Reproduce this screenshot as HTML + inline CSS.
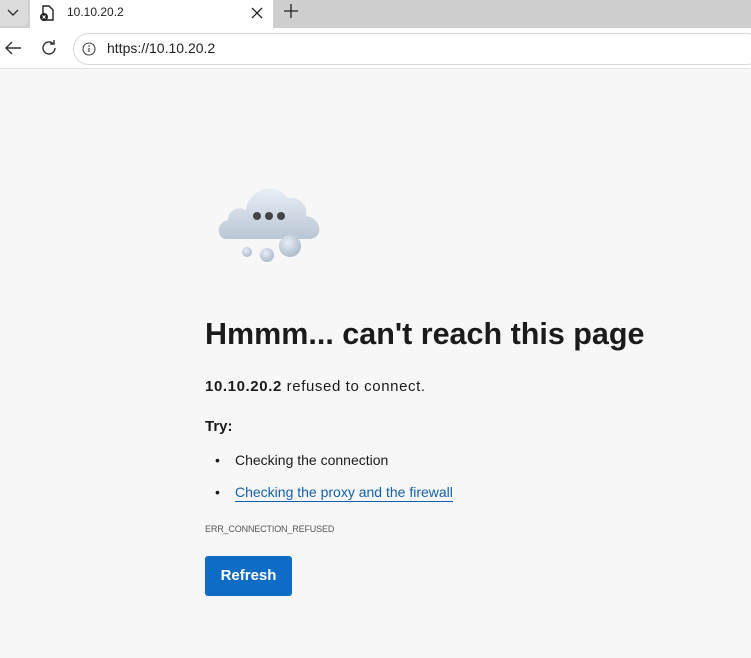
<!DOCTYPE html>
<html><head><meta charset="utf-8"><style>
*{margin:0;padding:0;box-sizing:border-box}
body{width:751px;height:658px;overflow:hidden;background:#f7f7f7;font-family:"Liberation Sans",sans-serif;position:relative;color:#1a1a1a}
.tabbar{position:absolute;left:0;top:0;width:751px;height:28px;background:#cfcfcf}
.tab{position:absolute;left:30px;top:0;width:243px;height:28px;background:#fff}
.nav{position:absolute;left:0;top:28px;width:751px;height:41px;background:#fff;border-bottom:1px solid #e5e5e5}
.addr{position:absolute;left:73px;top:33px;width:690px;height:32px;border:1px solid #d8d8d8;border-radius:16px;background:#fff}
.abs{position:absolute}
h1{position:absolute;left:205px;top:317px;font-size:30.5px;font-weight:bold;color:#1b1b1b;white-space:nowrap;letter-spacing:0}
</style></head><body>
<div class="tabbar">
  <div class="abs" style="left:0;top:0;width:28px;height:26px;background:#dcdcdc;border-radius:0 0 6px 0"></div>
  <svg class="abs" style="left:6px;top:7px" width="14" height="10"><path d="M2 3l5 5 5-5" stroke="#333" stroke-width="1.4" fill="none"/></svg>
  <div class="tab"></div>
  <svg class="abs" style="left:38px;top:4px" width="18" height="18"><path d="M5 2h6l4 4v10H5z" stroke="#222" stroke-width="1.4" fill="none"/><circle cx="6" cy="13" r="4" fill="#222"/><path d="M4.5 11.5l3 3M7.5 11.5l-3 3" stroke="#fff" stroke-width="1"/></svg>
  <div class="abs" style="left:67px;top:5px;font-size:12px;color:#222">10.10.20.2</div>
  <svg class="abs" style="left:251px;top:7px" width="12" height="12"><path d="M1 1l10 10M11 1L1 11" stroke="#222" stroke-width="1.3"/></svg>
  <svg class="abs" style="left:283px;top:3px" width="16" height="16"><path d="M8 1v14M1 8h14" stroke="#222" stroke-width="1.3"/></svg>
</div>
<div class="nav"></div>
<svg class="abs" style="left:4px;top:40px" width="18" height="16"><path d="M17 8H2M8 2L2 8l6 6" stroke="#333" stroke-width="1.4" fill="none"/></svg>
<svg class="abs" style="left:40px;top:39px" width="18" height="18"><path d="M15 9a6 6 0 1 1-2-4.5" stroke="#333" stroke-width="1.4" fill="none"/><path d="M14 1v4h-4" stroke="#333" stroke-width="1.4" fill="none"/></svg>
<div class="addr"></div>
<svg class="abs" style="left:81px;top:41px" width="16" height="16"><circle cx="8" cy="8" r="6" stroke="#444" stroke-width="1.1" fill="none"/><path d="M8 7v4" stroke="#444" stroke-width="1.2"/><circle cx="8" cy="5" r=".8" fill="#444"/></svg>
<div class="abs" style="left:107px;top:40px;font-size:14px;color:#222">https://10.10.20.2</div>

<svg class="abs" style="left:216px;top:182px" width="108" height="84">
<defs><linearGradient id="g" x1="0" y1="0" x2="0" y2="1"><stop offset="0" stop-color="#e8eef5"/><stop offset="1" stop-color="#b9c6d5"/></linearGradient>
<radialGradient id="b" cx=".4" cy=".35" r=".7"><stop offset="0" stop-color="#e8eef5"/><stop offset="1" stop-color="#a9b8c9"/></radialGradient></defs>
<path d="M10 57 C0 56 0 40 12 38 C12 28 22 24 30 28 C32 8 58 -2 72 16 C84 14 92 24 90 34 C106 36 108 56 94 57 Z" fill="url(#g)"/>
<circle cx="41" cy="34" r="4" fill="#444"/><circle cx="53" cy="34" r="4" fill="#444"/><circle cx="65" cy="34" r="4" fill="#444"/>
<circle cx="74" cy="64" r="11" fill="url(#b)"/>
<circle cx="51" cy="73" r="7" fill="url(#b)"/>
<circle cx="31" cy="70" r="5" fill="url(#b)"/>
</svg>

<h1>Hmmm... can't reach this page</h1>
<div class="abs" style="left:205px;top:378px;font-size:15px;color:#1b1b1b;letter-spacing:0.6px"><b>10.10.20.2</b> refused to connect.</div>
<div class="abs" style="left:205px;top:418px;font-size:15px;font-weight:bold">Try:</div>
<div class="abs" style="left:215px;top:452px;font-size:14px">•</div>
<div class="abs" style="left:235px;top:452px;font-size:14px">Checking the connection</div>
<div class="abs" style="left:215px;top:484px;font-size:14px">•</div>
<div class="abs" style="left:235px;top:484px;font-size:14px;color:#1160b0;border-bottom:1px solid #1160b0;line-height:17px">Checking the proxy and the firewall</div>
<div class="abs" style="left:205px;top:524px;font-size:9px;color:#555;letter-spacing:-0.15px">ERR_CONNECTION_REFUSED</div>
<div class="abs" style="left:205px;top:556px;width:87px;height:40px;background:#0f6cc4;border-radius:3px;color:#fff;font-weight:bold;font-size:15px;text-align:center;line-height:40px">Refresh</div>
</body></html>
